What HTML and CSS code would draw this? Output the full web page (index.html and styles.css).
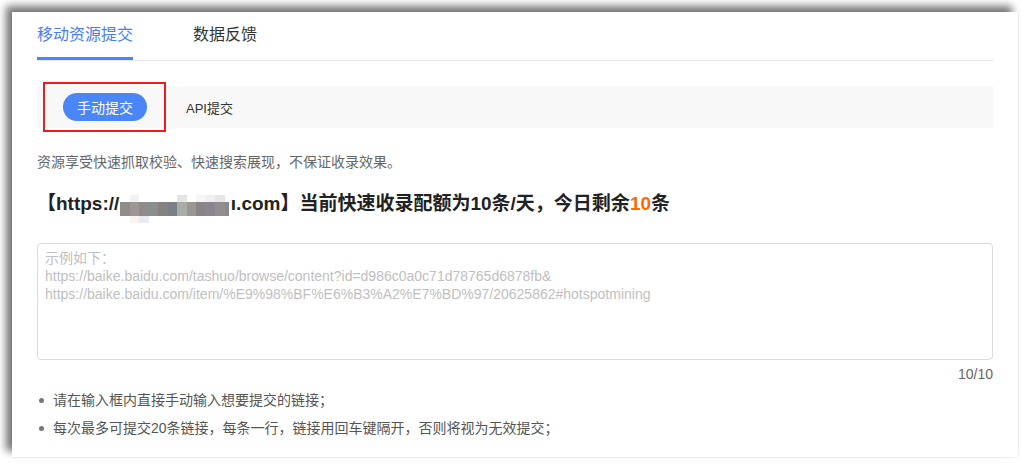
FILE: index.html
```html
<!DOCTYPE html>
<html lang="zh-CN">
<head>
  <meta charset="UTF-8" />
  <meta name="viewport" content="width=device-width, initial-scale=1.0" />
  <title>移动资源提交</title>
  <link rel="stylesheet" href="styles.css">
</head>
<body>
  <div class="card">
    <!-- Top tabs -->
    <div class="tabs">
      <div class="tab active">移动资源提交</div>
      <div class="tab">数据反馈</div>
    </div>
    <!-- Submit mode switch -->
    <div class="mode-bar">
      <div class="mode-hilite">
        <button class="mode-btn">手动提交</button>
      </div>
      <div class="mode-link">API提交</div>
    </div>
    <p class="intro">资源享受快速抓取校验、快速搜索展现，不保证收录效果。</p>
    <h2 class="quota">【https://<span class="mosaic"><i class="m1"></i><i class="m2"></i><i class="m3"></i><i class="m4"></i><i class="m5"></i><i class="m6"></i><i class="m7"></i><i class="m8"></i><i class="m9"></i><i class="m10"></i><i class="m11"></i><i class="m12"></i><i class="m13"></i></span>ı.com】当前快速收录配额为10条/天，今日剩余<span class="num">10</span>条</h2>
    <textarea class="links" placeholder="示例如下：&#10;https://baike.baidu.com/tashuo/browse/content?id=d986c0a0c71d78765d6878fb&amp;&#10;https://baike.baidu.com/item/%E9%98%BF%E6%B3%A2%E7%BD%97/20625862#hotspotmining"></textarea>
    <div class="counter">10/10</div>
    <ul class="tips">
      <li>请在输入框内直接手动输入想要提交的链接；</li>
      <li>每次最多可提交20条链接，每条一行，链接用回车键隔开，否则将视为无效提交；</li>
    </ul>
  </div>
</body>
</html>
```

FILE: styles.css
```css
* {
  margin: 0;
  padding: 0;
  box-sizing: border-box;
}
html, body {
  height: 100%;
}
body {
  background: #ffffff;
  padding: 12px 5px 6px 12px;
  font-family: "Liberation Sans", "Noto Sans CJK SC", sans-serif;
  color: #333;
  overflow: hidden;
}
.card {
  height: 100%;
  background: #fff;
  box-shadow: -6px -6px 8px rgba(0, 0, 0, 0.55), 1px 1px 1px rgba(0, 0, 0, 0.04);
  padding: 0 25px;
}
/* Tabs */
.tabs {
  display: flex;
  gap: 60px;
  border-bottom: 1px solid #e8e8e8;
  height: 49px;
}
.tab {
  font-size: 16px;
  line-height: 46px;
  color: #333;
}
.tab.active {
  color: #4a7ef0;
  border-bottom: 3px solid #4a86f5;
}
/* Mode switch */
.mode-bar {
  margin-top: 25px;
  height: 42px;
  background: #f8f8f8;
  display: flex;
  align-items: center;
}
.mode-hilite {
  margin-left: 6px;
  width: 123px;
  height: 50px;
  border: 2px solid #ee1c1c;
  display: flex;
  align-items: center;
  padding-left: 18px;
}
.mode-btn {
  width: 84px;
  height: 28px;
  border: none;
  border-radius: 14px;
  background: #4a86f5;
  color: #fff;
  font-size: 14px;
  font-family: "Noto Sans CJK SC", sans-serif;
}
.mode-link {
  margin-left: 20px;
  font-size: 13px;
  color: #333;
}
.intro {
  margin-top: 24px;
  font-size: 14px;
  color: #666;
  line-height: 20px;
}
.quota {
  margin-top: 19px;
  font-size: 19px;
  font-weight: 700;
  color: #222;
  line-height: 26px;
}
.quota .num {
  color: #ff6a00;
}
/* Blurred domain */
.mosaic {
  display: inline-flex;
  align-items: center;
  height: 26px;
  vertical-align: -6px;
  margin-left: 1px;
}
.mosaic i {
  display: block;
  width: 9.5px;
  height: 14px;
}
.mosaic .m1 { background: #8f8c8b; }
.mosaic .m2 { background: #9a9795; box-shadow: 0 -7px 0 #f2f2f2, 0 7px 0 #f7f4f2; }
.mosaic .m3 { background: #8e8b8a; box-shadow: 0 7px 0 #e8ecf0; }
.mosaic .m4 { background: #8b8e8e; }
.mosaic .m5 { background: #858382; }
.mosaic .m6 { background: #7b8086; }
.mosaic .m7 { background: #a9aca9; box-shadow: 0 -7px 0 #e3e4e4; }
.mosaic .m8 { background: #9a9694; }
.mosaic .m9 { background: #878585; box-shadow: 0 -7px 0 #f7f5f3; }
.mosaic .m10 { background: #8a8590; box-shadow: 0 -7px 0 #eeeff3; }
.mosaic .m11 { background: #908e91; box-shadow: 0 -7px 0 #e6e6e6; }
.mosaic .m12 { background: #8c8b8b; width: 4px; }
.mosaic .m13 { background: transparent; width: 2px; }
/* Textarea */
.links {
  display: block;
  width: 100%;
  margin-top: 21px;
  height: 117px;
  border: 1px solid #dcdcdc;
  border-radius: 4px;
  padding: 5px 7px;
  font-family: "Liberation Sans", "Noto Sans CJK SC", sans-serif;
  font-size: 14px;
  line-height: 18px;
  resize: none;
  outline: none;
}
.links::placeholder {
  color: #c0c0c0;
}
.counter {
  text-align: right;
  font-size: 14px;
  color: #666;
  margin-top: 6px;
  line-height: 16px;
}
.tips {
  list-style: none;
  margin-top: 4px;
}
.tips li {
  position: relative;
  padding-left: 16px;
  font-size: 14px;
  color: #555;
  line-height: 28px;
}
.tips li::before {
  content: "";
  position: absolute;
  left: 2px;
  top: 12px;
  width: 5px;
  height: 5px;
  border-radius: 50%;
  background: #777;
}
```
